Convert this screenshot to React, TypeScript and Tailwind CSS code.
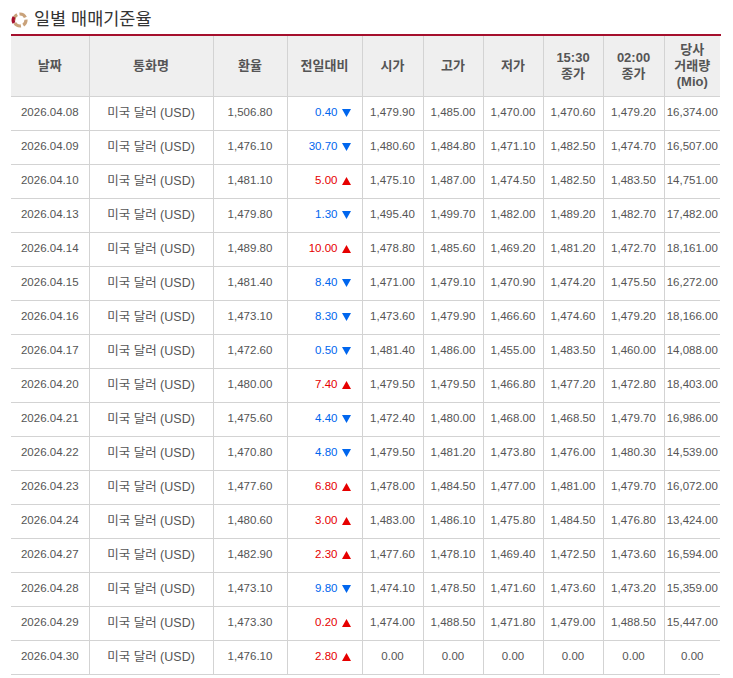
const rows: [string, string, string, "up" | "down", string, string, string, string, string, string][] = [
  ["2026.04.08", "1,506.80", "0.40", "down", "1,479.90", "1,485.00", "1,470.00", "1,470.60", "1,479.20", "16,374.00"],
  ["2026.04.09", "1,476.10", "30.70", "down", "1,480.60", "1,484.80", "1,471.10", "1,482.50", "1,474.70", "16,507.00"],
  ["2026.04.10", "1,481.10", "5.00", "up", "1,475.10", "1,487.00", "1,474.50", "1,482.50", "1,483.50", "14,751.00"],
  ["2026.04.13", "1,479.80", "1.30", "down", "1,495.40", "1,499.70", "1,482.00", "1,489.20", "1,482.70", "17,482.00"],
  ["2026.04.14", "1,489.80", "10.00", "up", "1,478.80", "1,485.60", "1,469.20", "1,481.20", "1,472.70", "18,161.00"],
  ["2026.04.15", "1,481.40", "8.40", "down", "1,471.00", "1,479.10", "1,470.90", "1,474.20", "1,475.50", "16,272.00"],
  ["2026.04.16", "1,473.10", "8.30", "down", "1,473.60", "1,479.90", "1,466.60", "1,474.60", "1,479.20", "18,166.00"],
  ["2026.04.17", "1,472.60", "0.50", "down", "1,481.40", "1,486.00", "1,455.00", "1,483.50", "1,460.00", "14,088.00"],
  ["2026.04.20", "1,480.00", "7.40", "up", "1,479.50", "1,479.50", "1,466.80", "1,477.20", "1,472.80", "18,403.00"],
  ["2026.04.21", "1,475.60", "4.40", "down", "1,472.40", "1,480.00", "1,468.00", "1,468.50", "1,479.70", "16,986.00"],
  ["2026.04.22", "1,470.80", "4.80", "down", "1,479.50", "1,481.20", "1,473.80", "1,476.00", "1,480.30", "14,539.00"],
  ["2026.04.23", "1,477.60", "6.80", "up", "1,478.00", "1,484.50", "1,477.00", "1,481.00", "1,479.70", "16,072.00"],
  ["2026.04.24", "1,480.60", "3.00", "up", "1,483.00", "1,486.10", "1,475.80", "1,484.50", "1,476.80", "13,424.00"],
  ["2026.04.27", "1,482.90", "2.30", "up", "1,477.60", "1,478.10", "1,469.40", "1,472.50", "1,473.60", "16,594.00"],
  ["2026.04.28", "1,473.10", "9.80", "down", "1,474.10", "1,478.50", "1,471.60", "1,473.60", "1,473.20", "15,359.00"],
  ["2026.04.29", "1,473.30", "0.20", "up", "1,474.00", "1,488.50", "1,471.80", "1,479.00", "1,488.50", "15,447.00"],
  ["2026.04.30", "1,476.10", "2.80", "up", "0.00", "0.00", "0.00", "0.00", "0.00", "0.00"],
];

function TitleIcon() {
  return (
    <svg width="18" height="18" viewBox="0 0 18 18" className="shrink-0">
      <circle cx="9" cy="9" r="6" fill="none" stroke="#c9a27a" strokeWidth="3.2" strokeDasharray="7 2.4" strokeDashoffset="1.2" />
      <path d="M3 6 A6 6 0 0 0 3 12" fill="none" stroke="#a50f2d" strokeWidth="3.2" />
    </svg>
  );
}

function Arrow({ dir }: { dir: "up" | "down" }) {
  return (
    <svg width="9" height="8" viewBox="0 0 9 8" className="ml-[4px] inline-block">
      {dir === "up" ? (
        <polygon points="4.5,0 9,8 0,8" fill="#e60000" />
      ) : (
        <polygon points="0,0 9,0 4.5,8" fill="#0066ee" />
      )}
    </svg>
  );
}

const th = "border-r border-b border-[#d3d3d3] bg-[#efefef] text-[13px] font-bold leading-[16px] text-[#555] last:border-r-0";
const td = "h-[34px] border-r border-b border-[#d3d3d3] p-0 text-center text-[11.5px] text-[#555] last:border-r-0";

export default function App() {
  return (
    <div className="min-h-screen bg-white pl-[11px] pr-[12px] pt-[8px] [font-family:'Liberation_Sans','Noto_Sans_CJK_KR',sans-serif]">
      <div className="flex h-[26px] items-center gap-[5px] pb-[2px]">
        <TitleIcon />
        <h1 className="text-[17.5px] font-normal leading-none text-[#333]">일별 매매기준율</h1>
      </div>
      <div className="border-t-2 border-[#a50f2d]">
        <table className="w-[709px] table-fixed border-collapse">
          <colgroup>
            <col className="w-[78px]" />
            <col className="w-[124px]" />
            <col className="w-[74px]" />
            <col className="w-[75px]" />
            <col className="w-[61px]" />
            <col className="w-[60px]" />
            <col className="w-[60px]" />
            <col className="w-[60px]" />
            <col className="w-[61px]" />
            <col className="w-[56px]" />
          </colgroup>
          <thead>
            <tr className="h-[60px]">
              <th className={th}>날짜</th>
              <th className={th}>통화명</th>
              <th className={th}>환율</th>
              <th className={th}>전일대비</th>
              <th className={th}>시가</th>
              <th className={th}>고가</th>
              <th className={th}>저가</th>
              <th className={th}>
                15:30
                <br />
                종가
              </th>
              <th className={th}>
                02:00
                <br />
                종가
              </th>
              <th className={`${th} leading-[13px]`}>
                당사
                <br />
                거래량
                <br />
                (Mio)
              </th>
            </tr>
          </thead>
          <tbody>
            {rows.map((r) => (
              <tr key={r[0]}>
                <td className={td}>{r[0]}</td>
                <td className={`${td} text-[12.5px]`}>미국 달러 (USD)</td>
                <td className={td}>{r[1]}</td>
                <td className={`${td} pr-[11px] text-right`}>
                  <span className={r[3] === "up" ? "text-[#e60000]" : "text-[#0066ee]"}>{r[2]}</span>
                  <Arrow dir={r[3]} />
                </td>
                <td className={td}>{r[4]}</td>
                <td className={td}>{r[5]}</td>
                <td className={td}>{r[6]}</td>
                <td className={td}>{r[7]}</td>
                <td className={td}>{r[8]}</td>
                <td className={td}>{r[9]}</td>
              </tr>
            ))}
          </tbody>
        </table>
      </div>
    </div>
  );
}
